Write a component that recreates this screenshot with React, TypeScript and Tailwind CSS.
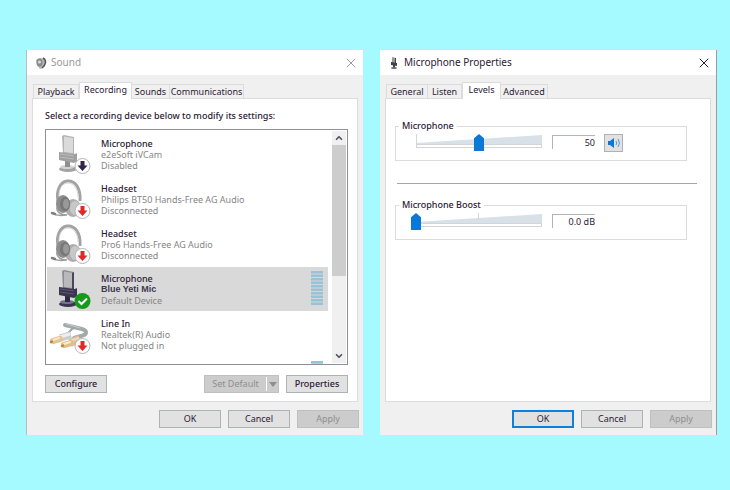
import React from 'react';
import { ChevronDown, ChevronUp, X } from 'lucide-react';
import { clsx } from 'clsx';

type DeviceKind = 'microphone' | 'headset' | 'line';
type DeviceStatus = 'disabled' | 'unplugged' | 'default';

interface Device {
  id: string;
  kind: DeviceKind;
  status: DeviceStatus;
  name: string;
  driver: string;
  state: string;
}

const devices: Device[] = [
  { id: 'ivcam', kind: 'microphone', status: 'disabled', name: 'Microphone', driver: 'e2eSoft iVCam', state: 'Disabled' },
  { id: 'bt50', kind: 'headset', status: 'unplugged', name: 'Headset', driver: 'Philips BT50 Hands-Free AG Audio', state: 'Disconnected' },
  { id: 'pro6', kind: 'headset', status: 'unplugged', name: 'Headset', driver: 'Pro6 Hands-Free AG Audio', state: 'Disconnected' },
  { id: 'yeti', kind: 'microphone', status: 'default', name: 'Microphone', driver: 'Blue Yeti Mic', state: 'Default Device' },
  { id: 'line', kind: 'line', status: 'unplugged', name: 'Line In', driver: 'Realtek(R) Audio', state: 'Not plugged in' },
];

function MicrophoneShape({ dark }: { dark: boolean }) {
  return (
    <g>
      <ellipse cx="21" cy="37" rx="9" ry="3" fill={dark ? '#3b3550' : '#a3a3a3'} />
      <ellipse cx="20" cy="35" rx="7" ry="2" fill={dark ? '#77728a' : '#d2d2d2'} />
      <path d="M18 28h5v7h-5z" fill={dark ? '#2e2942' : '#8f8f8f'} />
      <path d="M15 4l2-1 10 2v17l-11-1z" fill={dark ? '#8d8d92' : '#b4b4b4'} />
      <path d="M17 4.500l9 1.500v15l-9-1z" fill={dark ? '#b9b9bb' : '#dadada'} />
      {dark && <path d="M25 6l2-1v17h-2z" fill="#4a4560" />}
      <path d="M12 20l16 2 2-1v8l-3 2-15-3z" fill={dark ? '#3b3550' : '#a0a0a0'} />
      <path d="M13 22l14 2M13 25l14 2" stroke={dark ? '#5d5872' : '#bcbcbc'} strokeWidth="1" />
    </g>
  );
}

function HeadsetShape() {
  return (
    <g fill="none">
      <path d="M11 24C9 14 13 5 20 4c8-1 14 7 13 20" stroke="#a3a3a3" strokeWidth="3" />
      <path d="M12 19c0-7 3-13 9-13 6 0 10 6 10 14" stroke="#d6d6d6" strokeWidth="1" />
      <ellipse cx="26" cy="31" rx="8" ry="9" fill="#adadad" />
      <ellipse cx="28" cy="31" rx="5" ry="7" fill="#c8c8c8" />
      <ellipse cx="16" cy="27" rx="7" ry="9" fill="#8d8d8d" />
      <ellipse cx="18" cy="27" rx="5" ry="7" fill="#787878" />
      <ellipse cx="19" cy="27" rx="3" ry="5" fill="#999" />
      <path d="M10 30c-1 5 4 8 10 8M5 36c3 2 8 3 14 2" stroke="#9c9c9c" strokeWidth="1.500" />
      <path d="M5 36l3 1" stroke="#808080" strokeWidth="2.500" strokeLinecap="round" />
    </g>
  );
}

function LineShape() {
  return (
    <g fill="none" strokeLinecap="round">
      <path d="M18 13l17 4c6 2 5 6-1 7l-7 2" stroke="#a3a8ab" strokeWidth="4" />
      <path d="M19 12l14 4" stroke="#c6cacc" strokeWidth="1" />
      <path d="M27 16c-4 1-3 4-8 6" stroke="#9ca1a4" strokeWidth="2" />
      <path d="M13 26l11-3" stroke="#c9cdd0" strokeWidth="7" strokeLinecap="butt" />
      <path d="M13 25l10-3" stroke="#eceeef" strokeWidth="3" strokeLinecap="butt" />
      <path d="M6 29l7-2" stroke="#e4c494" strokeWidth="6" />
      <path d="M6 28l6-2" stroke="#f8e7c7" strokeWidth="2" />
      <path d="M4 30l1-0.500" stroke="#b98447" strokeWidth="2.500" />
      <path d="M23 31l10-4" stroke="#ddc09c" strokeWidth="8" strokeLinecap="butt" />
      <path d="M23 29l9-3" stroke="#eedcc2" strokeWidth="2" strokeLinecap="butt" />
      <path d="M17 33l7-2" stroke="#e3bd8a" strokeWidth="6" />
      <path d="M17 32l6-2" stroke="#fbebcd" strokeWidth="2" />
      <path d="M15 34l1-0.500" stroke="#b98447" strokeWidth="2.500" />
    </g>
  );
}

function StatusBadge({ status }: { status: DeviceStatus }) {
  if (status === 'default') {
    return (
      <g>
        <circle cx="35.500" cy="34" r="8" fill="#159a1c" />
        <path d="M31.500 34l3 3 5.500-5.500" fill="none" stroke="#fff" strokeWidth="2" />
      </g>
    );
  }
  return (
    <g>
      <circle cx="35.500" cy="34" r="7.500" fill="#fff" stroke="#b5b5b5" />
      <path d="M33.500 29h4v4.500H40.500L35.500 39 30.500 33.500h3z" fill={status === 'disabled' ? '#33254a' : '#e32626'} />
    </g>
  );
}

function DeviceIcon({ kind, status }: { kind: DeviceKind; status: DeviceStatus }) {
  return (
    <svg viewBox="0 0 44 44" className="size-11 shrink-0" aria-hidden="true">
      {kind === 'microphone' && <MicrophoneShape dark={status === 'default'} />}
      {kind === 'headset' && <HeadsetShape />}
      {kind === 'line' && <LineShape />}
      <StatusBadge status={status} />
    </svg>
  );
}

function LevelMeter() {
  return (
    <svg viewBox="0 0 12 34" className="mt-1 mr-[5px] h-[34px] w-3 shrink-0" aria-hidden="true">
      <path d="M0 0h12v34H0z" fill="#d5d7d8" />
      <path d="M6 0v34" stroke="#98c3d6" strokeWidth="12" strokeDasharray="2.400 1.100" />
    </svg>
  );
}

function DeviceRow({ device }: { device: Device }) {
  const selected = device.status === 'default';
  return (
    <li role="option" aria-selected={selected} className={clsx('mb-px flex h-11', selected && 'bg-[#d9d9d9]')}>
      <DeviceIcon kind={device.kind} status={device.status} />
      <div className="min-w-0 flex-1 pt-[6px] pl-[10px] leading-[11px] whitespace-nowrap text-[#858585]">
        <p className="font-medium text-[#2b2035]">{device.name}</p>
        <p className={clsx(selected && 'font-["Liberation_Sans",sans-serif] font-bold text-[#41384f]')}>
          {device.driver}
        </p>
        <p>{device.state}</p>
      </div>
      {selected && <LevelMeter />}
    </li>
  );
}

interface DialogButtonProps {
  children: React.ReactNode;
  disabled?: boolean;
  primary?: boolean;
  medium?: boolean;
}

function DialogButton({ children, disabled, primary, medium }: DialogButtonProps) {
  return (
    <button
      type="button"
      disabled={disabled}
      className={clsx(
        'flex h-[18px] w-[62px] items-center justify-center',
        primary ? 'border-2 border-[#0f7fdc]' : 'border',
        disabled ? 'border-[#bfbfbf] bg-[#cccccc] text-[#8e8e8e]' : 'bg-[#e1e1e1] text-[#2b2035]',
        !disabled && !primary && 'border-[#adb2b5]',
        medium && 'font-medium'
      )}
    >
      {children}
    </button>
  );
}

interface Tab {
  label: string;
  width: string;
}

interface DialogProps {
  title: string;
  icon: React.ReactNode;
  inactive?: boolean;
  tabs: Tab[];
  activeTab: string;
  primaryOk?: boolean;
  className?: string;
  children: React.ReactNode;
}

function Dialog({ title, icon, inactive, tabs, activeTab, primaryOk, className, children }: DialogProps) {
  return (
    <section aria-label={title} className={clsx('flex min-w-0 flex-1 flex-col bg-[#f0f0f0]', className)}>
      <header className="flex h-[25px] items-center bg-white pr-1 pl-2">
        {icon}
        <h1 className={clsx('ml-1 flex-1 text-[10px]', inactive ? 'text-[#999]' : 'text-[#2b2035]')}>{title}</h1>
        <button type="button" aria-label="Close" className={inactive ? 'text-[#999]' : 'text-[#2b2035]'}>
          <X size={16} strokeWidth={1.5} />
        </button>
      </header>

      <div className="flex flex-1 flex-col px-[5px] pt-[7px]">
        <div role="tablist" className="flex items-end pl-[2px]">
          {tabs.map((tab) => (
            <button
              key={tab.label}
              type="button"
              role="tab"
              aria-selected={tab.label === activeTab}
              className={clsx(
                'border border-b-0 border-[#dcdcdc] text-center leading-[14px] whitespace-nowrap text-[#2b2035]',
                tab.width,
                tab.label === activeTab ? 'z-10 -mb-px h-[17px] bg-white pb-[2px]' : '-ml-px h-[14px] bg-[#f0f0f0]'
              )}
            >
              {tab.label}
            </button>
          ))}
        </div>
        <div role="tabpanel" className="flex-1 border border-[#dcdcdc] bg-white">
          {children}
        </div>
      </div>

      <footer className="flex justify-end gap-[7px] pt-2 pr-1 pb-[7px]">
        <DialogButton primary={primaryOk}>OK</DialogButton>
        <DialogButton>Cancel</DialogButton>
        <DialogButton disabled>Apply</DialogButton>
      </footer>
    </section>
  );
}

function SoundDialog() {
  return (
    <Dialog
      title="Sound"
      inactive
      className="border-l border-[#b9bcbd]"
      activeTab="Recording"
      tabs={[
        { label: 'Playback', width: 'w-[46px]' },
        { label: 'Recording', width: 'w-[53px]' },
        { label: 'Sounds', width: 'w-[39px]' },
        { label: 'Communications', width: 'w-[75px]' },
      ]}
      icon={
        <svg viewBox="0 0 12 12" className="size-3" aria-hidden="true">
          <path d="M1 3l4-2 5 1 1 4-3 5-3 1-3-4z" fill="#b5b5b5" />
          <ellipse cx="4.500" cy="5.500" rx="3" ry="4" fill="#8a8a8a" />
          <circle cx="4.500" cy="5" r="1.500" fill="#ddd" />
          <path d="M8 1c4 2 3 7-1 10" fill="none" stroke="#555" strokeWidth="1.500" />
        </svg>
      }
    >
      <div className="pt-[10px] pr-[9px] pb-2 pl-3">
        <p id="device-label" className="leading-[14px] font-medium whitespace-nowrap text-[#2b2035]">
          Select a recording device below to modify its settings:
        </p>
        <div className="mt-[6px] flex h-[236px] overflow-hidden border border-[#8d9096] p-px">
          <ul role="listbox" aria-labelledby="device-label" className="mt-px min-w-0 flex-1">
            {devices.map((device) => (
              <DeviceRow key={device.id} device={device} />
            ))}
            <li className="flex h-11 justify-end" aria-hidden="true">
              <LevelMeter />
            </li>
          </ul>
          <div className="ml-1 flex w-[14px] shrink-0 flex-col items-center bg-[#f0f0f0] text-[#555063]">
            <ChevronUp size={14} strokeWidth={4} className="p-[2px]" />
            <div className="h-[131px] w-full bg-[#cdcdcd]" />
            <ChevronDown size={14} strokeWidth={4} className="mt-auto p-[2px]" />
          </div>
        </div>
        <div className="mt-[10px] flex items-center gap-[7px]">
          <DialogButton medium>Configure</DialogButton>
          <button
            type="button"
            disabled
            className="ml-auto flex h-[18px] w-[75px] items-center border border-[#bfbfbf] bg-[#cccccc] text-[#8e8e8e]"
          >
            <span className="flex-1 text-center whitespace-nowrap">Set Default</span>
            <span className="flex h-[14px] w-3 items-center justify-center border-l border-white">
              <svg viewBox="0 0 8 5" className="h-[5px] w-2" aria-hidden="true">
                <path d="M0 0h8L4 5z" fill="#8e8e8e" />
              </svg>
            </span>
          </button>
          <DialogButton medium>Properties</DialogButton>
        </div>
      </div>
    </Dialog>
  );
}

interface LevelGroupProps {
  label: string;
  level: number;
  value: string;
  tick?: boolean;
  children?: React.ReactNode;
}

function LevelGroup({ label, level, value, tick, children }: LevelGroupProps) {
  return (
    <fieldset className="mr-[23px] flex h-[41px] border border-[#dcdcdc] pl-[15px]">
      <legend className="-ml-3 px-[3px] leading-[12px] font-medium text-[#2b2035]">{label}</legend>
      <div className="relative mt-[2px] h-[17px] w-[136px]">
        <svg viewBox="0 0 136 17" className="h-[17px] w-[136px]" aria-hidden="true">
          <path d="M5 9L131 1v9H5z" fill="#d7e1e7" />
          <path d="M5 10.500h126M5 13.500h126M130.500 10v4" stroke="#d3d6d8" />
          <path d={tick ? 'M67.500 0v6' : 'M5.500 0v14'} stroke="#d3d6d8" />
        </svg>
        <input
          type="range"
          aria-label={label}
          min={0}
          max={100}
          defaultValue={level}
          className="absolute inset-0 m-0 h-[17px] w-full appearance-none bg-transparent [&::-webkit-slider-thumb]:h-[17px] [&::-webkit-slider-thumb]:w-[10px] [&::-webkit-slider-thumb]:appearance-none [&::-webkit-slider-thumb]:bg-[#0b78d7] [&::-webkit-slider-thumb]:[clip-path:polygon(0_25%,50%_0,100%_25%,100%_100%,0_100%)]"
        />
      </div>
      <input
        type="text"
        aria-label={`${label} value`}
        readOnly
        value={value}
        className="mt-[3px] ml-[5px] h-[14px] w-[43px] border-t border-l border-[#b0b5b8] text-right text-[#2b2035]"
      />
      {children}
    </fieldset>
  );
}

function MicrophonePropertiesDialog() {
  return (
    <Dialog
      title="Microphone Properties"
      className="border-r border-[#999da0]"
      activeTab="Levels"
      primaryOk
      tabs={[
        { label: 'General', width: 'w-[42px]' },
        { label: 'Listen', width: 'w-[35px]' },
        { label: 'Levels', width: 'w-[39px]' },
        { label: 'Advanced', width: 'w-[48px]' },
      ]}
      icon={
        <svg viewBox="0 0 12 12" className="size-3" aria-hidden="true">
          <path d="M4 0l4 1v6H4z" fill="#999" />
          <path d="M7 1h1v6H7zM3 5l6 1v3L3 8z" fill="#443e50" />
          <path d="M5 8h2v2H5z" fill="#443e50" />
          <ellipse cx="6" cy="11" rx="3" ry="1" fill="#666" />
        </svg>
      }
    >
      <div className="pt-[21px] pl-[9px]">
        <LevelGroup label="Microphone" level={50} value="50">
          <button
            type="button"
            aria-label="Mute"
            className="mt-[2px] ml-[9px] flex h-[18px] w-[19px] items-center justify-center border border-[#adb2b5] bg-[#e1e1e1]"
          >
            <svg viewBox="0 0 14 12" className="h-3 w-[14px] shrink-0" aria-hidden="true">
              <path d="M1 4h2l4-3v10L3 8H1z" fill="#0b78d7" />
              <path d="M9 4q1.500 2 0 4M11 2q3 4 0 8" fill="none" stroke="#4a9ade" />
            </svg>
          </button>
        </LevelGroup>
        <hr className="mt-[22px] mr-[13px] ml-[2px] border-[#a5a5a5]" />
        <div className="mt-[15px]">
          <LevelGroup label="Microphone Boost" level={0} value="0.0 dB" tick />
        </div>
      </div>
    </Dialog>
  );
}

export default function App() {
  return (
    <main className='flex min-h-screen items-start bg-[#a5faff] pt-[50px] pr-[13px] pl-[26px] font-["Noto_Sans","Open_Sans",sans-serif] text-[9px]'>
      <div className="flex min-w-0 flex-1 items-stretch gap-[17px]">
        <SoundDialog />
        <MicrophonePropertiesDialog />
      </div>
    </main>
  );
}
